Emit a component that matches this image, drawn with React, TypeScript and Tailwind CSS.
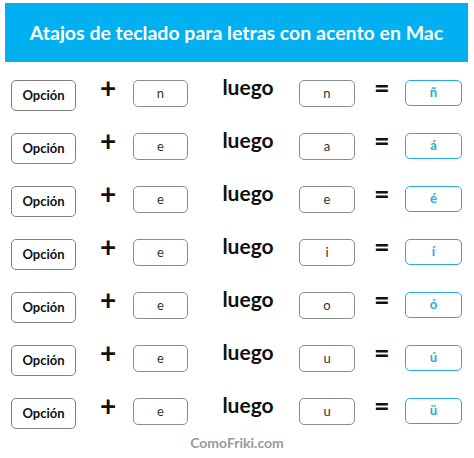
import React from 'react';

const rows = [
  { key: 'n', second: 'n', result: 'ñ' },
  { key: 'e', second: 'a', result: 'á' },
  { key: 'e', second: 'e', result: 'é' },
  { key: 'e', second: 'i', result: 'í' },
  { key: 'e', second: 'o', result: 'ó' },
  { key: 'e', second: 'u', result: 'ú' },
  { key: 'e', second: 'u', result: 'ü' },
] as const;

const ShortcutRow: React.FC<{ keyChar: string; second: string; result: string }> = ({
  keyChar,
  second,
  result,
}) => (
  <div className="flex h-[36px] items-start">
    <div className="ml-[11px] mt-[5px] flex h-[31px] w-[65px] items-center justify-center rounded-[5px] border-[1.5px] border-[#7f7f7f] text-[13px] font-bold text-[#111]">
      Opción
    </div>
    <div className="ml-[23px] mt-[-2px] w-[18px] text-center text-[28px] font-bold leading-[28px] text-[#111]">+</div>
    <div className="ml-[16px] mt-[5px] flex h-[27px] w-[55px] items-center justify-center rounded-[5px] border-[1.5px] border-[#8c8c8c] text-[13px] text-[#333]">
      {keyChar}
    </div>
    <div className="ml-[33px] mt-0 w-[54px] text-center text-[21px] font-bold leading-[24px] text-[#111]">luego</div>
    <div className="ml-[24px] mt-[5px] flex h-[27px] w-[56px] items-center justify-center rounded-[5px] border-[1.5px] border-[#8c8c8c] text-[13px] text-[#333]">
      {second}
    </div>
    <div className="ml-[19px] mt-[-2px] w-[14px] text-center text-[27px] font-bold leading-[28px] text-[#111]">=</div>
    <div className="ml-[17px] mt-[5px] flex h-[26px] w-[57px] items-center justify-center rounded-[5px] border-[1.5px] border-[#29a9de] text-[13px] font-bold text-[#29a9de]">
      {result}
    </div>
  </div>
);

export default function App() {
  return (
    <div className="h-[458px] w-[474px] bg-white pt-[3px] font-['Lato','Open_Sans',sans-serif]">
      <div className="ml-[5px] flex h-[59px] w-[463px] items-center justify-center bg-[#00b0f0] text-[19.5px] font-bold text-white">
        Atajos de teclado para letras con acento en Mac
      </div>
      <div className="mt-[13px] flex flex-col gap-[17px]">
        {rows.map((r, i) => (
          <ShortcutRow key={i} keyChar={r.key} second={r.second} result={r.result} />
        ))}
      </div>
      <div className="mt-[6px] text-center text-[14px] font-bold leading-[16px] text-[#9a9a9a]">ComoFriki.com</div>
    </div>
  );
}
